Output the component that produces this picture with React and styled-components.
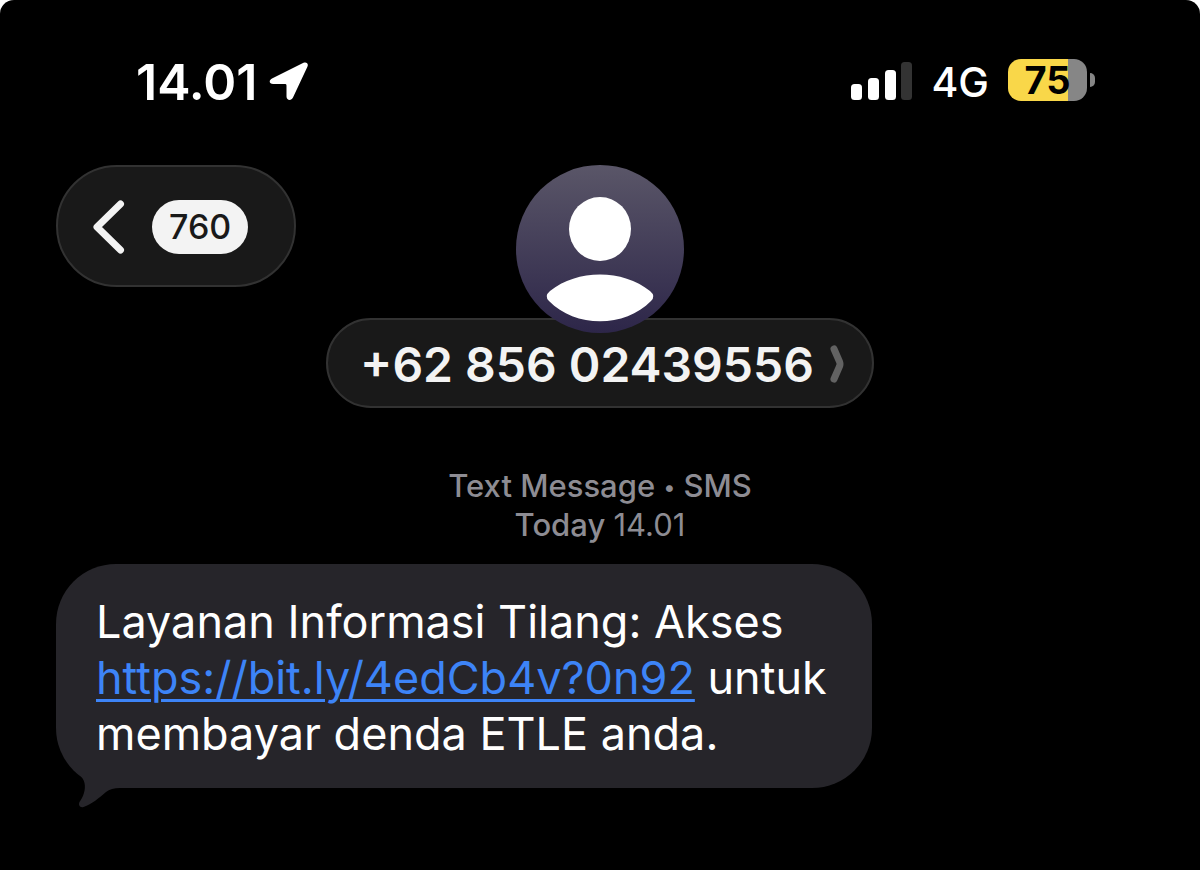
import React from 'react';
import styled, { createGlobalStyle } from 'styled-components';

const GlobalStyle = createGlobalStyle`
  * { box-sizing: border-box; }
  body {
    margin: 0;
    background: #fff;
    font-family: Inter, "Liberation Sans", sans-serif;
    color: #fff;
  }
`;

const Screen = styled.main`
  min-height: 100vh;
  background: #000;
  border-radius: 14px 14px 0 0;
  display: flex;
  flex-direction: column;
`;

const StatusBar = styled.header`
  display: flex;
  justify-content: space-between;
  align-items: center;
  padding: 52px 105px 0 136px;
`;

const StatusGroup = styled.div`
  display: flex;
  align-items: center;
  gap: ${(p) => p.$gap}px;
`;

const Clock = styled.time`
  font-size: 50px;
  line-height: 60px;
  font-weight: 600;
`;

const Network = styled.span`
  font-size: 41px;
  line-height: 60px;
  font-weight: 500;
`;

const Battery = styled.div`
  display: flex;
  align-items: center;
  gap: 3px;
  padding-bottom: 4px;
`;

const BatteryBody = styled.div`
  width: 79px;
  height: 42px;
  border-radius: 13px;
  background: linear-gradient(to right, #f9d749 0 60px, #868686 60px);
  color: #000;
  font-size: 38px;
  line-height: 42px;
  font-weight: 700;
  text-align: center;
`;

const BatteryTip = styled.div`
  width: 5px;
  height: 14px;
  border-radius: 0 6px 6px 0;
  background: #868686;
`;

const ChatHeader = styled.nav`
  display: grid;
  grid-template-columns: 1fr auto 1fr;
  align-items: start;
  padding: 53px 56px 0;
`;

const GlassButton = styled.button`
  display: flex;
  align-items: center;
  font-family: inherit;
  color: #f3f3f3;
  background: #191919;
  border: 2px solid #323232;
  cursor: pointer;
`;

const BackButton = styled(GlassButton)`
  justify-self: start;
  gap: 26px;
  width: 240px;
  height: 122px;
  padding: 2px 0 0 34px;
  border-radius: 61px;
`;

const UnreadCount = styled.span`
  padding: 0 17px;
  border-radius: 27px;
  background: #f3f3f3;
  color: #191919;
  font-size: 34px;
  line-height: 54px;
  font-weight: 500;
`;

const Contact = styled.div`
  display: flex;
  flex-direction: column;
  align-items: center;
`;

const Avatar = styled.svg`
  position: relative;
  z-index: 1;
  margin-bottom: -15px;
`;

const ContactButton = styled(GlassButton)`
  justify-content: center;
  gap: 16px;
  width: 548px;
  height: 90px;
  padding: 2px 0 0 4px;
  border-radius: 45px;
  font-size: 48px;
  font-weight: 600;
`;

const Conversation = styled.section`
  padding: 58px 56px 0;
`;

const Stamp = styled.p`
  margin: 0 0 20px;
  text-align: center;
  color: #8d8c93;
  font-size: 31px;
  line-height: 39px;
  font-weight: 500;
`;

const StampDot = styled.span`
  font-size: 22px;
  line-height: 1;
  vertical-align: 2px;
`;

const StampTime = styled.time`
  font-weight: 400;
`;

const Bubble = styled.article`
  position: relative;
  width: fit-content;
  max-width: 75%;
  padding: 30px 40px 26px;
  border-radius: 60px;
  background: #26252a;
  font-size: 45px;
  line-height: 56px;
`;

const Tail = styled.svg`
  position: absolute;
  left: 16px;
  bottom: -20px;
`;

const Link = styled.a`
  color: #3d84f7;
  text-decoration: underline;
  text-decoration-thickness: 3px;
  text-underline-offset: 5px;
`;

export default function App() {
  return (
    <Screen>
      <GlobalStyle />
      <StatusBar>
        <StatusGroup $gap={12}>
          <Clock>14.01</Clock>
          <svg width="40" height="40" viewBox="0 0 40 40" aria-label="Location in use">
            <path d="M3 16.5 L34.5 .8 C37.5 -.6 39.8 1.8 38.4 4.8 L24 35.5 C22.200 39.400 17.500 38.400 17.500 34.500 V23.400 Q17.500 22 16.100 22 H4.200 C.2 22 -.6 18.300 3 16.500Z" fill="#fff" />
          </svg>
        </StatusGroup>
        <StatusGroup $gap={19}>
          <svg width="61" height="40" viewBox="0 0 61 40" aria-label="Signal strength">
            <rect x="0" y="22" width="11" height="16" rx="3.5" fill="#fff" />
            <rect x="17" y="16" width="11" height="22" rx="3.5" fill="#fff" />
            <rect x="34" y="8" width="11" height="30" rx="3.5" fill="#fff" />
            <rect x="50" y="0" width="11" height="38" rx="3.5" fill="#333" />
          </svg>
          <Network>4G</Network>
          <Battery>
            <BatteryBody>75</BatteryBody>
            <BatteryTip />
          </Battery>
        </StatusGroup>
      </StatusBar>

      <ChatHeader>
        <BackButton aria-label="Back, 760 unread">
          <svg width="34" height="54" viewBox="0 0 34 54" fill="none">
            <path d="M28.5 4 L5 27 L28.5 50" stroke="#f3f3f3" strokeWidth="7" strokeLinecap="round" strokeLinejoin="round" />
          </svg>
          <UnreadCount>760</UnreadCount>
        </BackButton>
        <Contact>
          <Avatar width="168" height="168" viewBox="0 0 168 168" aria-hidden="true">
            <defs>
              <linearGradient id="avatarFill" x1="0" y1="0" x2="0" y2="1">
                <stop offset="0" stopColor="#5a5668" />
                <stop offset="1" stopColor="#2d2649" />
              </linearGradient>
            </defs>
            <circle cx="84" cy="84" r="84" fill="url(#avatarFill)" />
            <ellipse cx="84" cy="64" rx="31" ry="32" fill="#fff" />
            <path d="M34 126 C61 104 107 104 134 126 Q140 131 135 136 C109 163 59 163 33 136 Q28 131 34 126Z" fill="#fff" />
          </Avatar>
          <ContactButton>
            +62 856 02439556
            <svg width="14" height="38" viewBox="0 0 14 38" fill="none" aria-hidden="true">
              <path d="M4 4 L9.5 16.5 Q10.5 19 9.5 21.5 L4 34" stroke="#626262" strokeWidth="7" strokeLinecap="round" />
            </svg>
          </ContactButton>
        </Contact>
      </ChatHeader>

      <Conversation>
        <Stamp>
          Text Message <StampDot>•</StampDot> SMS
          <br />
          Today <StampTime>14.01</StampTime>
        </Stamp>
        <Bubble>
          Layanan Informasi Tilang: Akses{' '}
          <Link href="https://bit.ly/4edCb4v?0n92">https://bit.ly/4edCb4v?0n92</Link> untuk
          membayar denda ETLE anda.
          <Tail width="50" height="44" viewBox="0 0 50 44" aria-hidden="true">
            <path d="M0 3 C5 9 11 12 12.5 19 C14 26 11 33 7.5 38 C6 41 8 44 11.5 43 C20 40 27 34 34 28 Q39 24 48 24 V3Z" fill="#26252a" />
          </Tail>
        </Bubble>
      </Conversation>
    </Screen>
  );
}
